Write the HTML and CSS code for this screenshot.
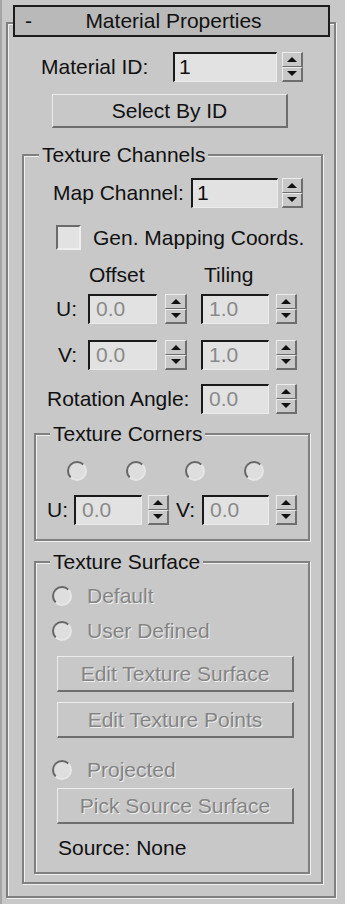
FILE: index.html
```html
<!DOCTYPE html>
<html lang="en">
<head>
    <meta charset="UTF-8">
    <title>Material Properties</title>
    <link rel="stylesheet" href="styles.css">
</head>
<body>
    <div class="page">
        <div class="rollout">
            <div class="rollout-head">
                <span class="toggle">-</span>
                <span class="rollout-title">Material Properties</span>
                <span></span>
            </div>

            <div class="row row-id">
                <span class="lbl lbl-id">Material ID:</span>
                <div class="field field-id">1</div>
                <div class="arrows arrows-id"><span class="up"></span><span class="down"></span></div>
            </div>

            <button class="btn btn-select">Select By ID</button>

            <fieldset class="group group-channels">
                <legend>Texture Channels</legend>

                <div class="row row-map">
                    <span class="lbl lbl-map">Map Channel:</span>
                    <div class="field field-map">1</div>
                    <div class="arrows arrows-map"><span class="up"></span><span class="down"></span></div>
                </div>

                <div class="row row-check">
                    <span class="checkbox"></span>
                    <span class="check-text">Gen. Mapping Coords.</span>
                </div>

                <div class="row row-head">
                    <span class="col-offset">Offset</span>
                    <span>Tiling</span>
                </div>

                <div class="row row-uv">
                    <span class="lbl lbl-uv">U:</span>
                    <div class="field off field-off">0.0</div>
                    <div class="arrows arrows-off"><span class="up"></span><span class="down"></span></div>
                    <div class="field off field-til">1.0</div>
                    <div class="arrows arrows-til"><span class="up"></span><span class="down"></span></div>
                </div>

                <div class="row row-uv row-v">
                    <span class="lbl lbl-uv">V:</span>
                    <div class="field off field-off">0.0</div>
                    <div class="arrows arrows-off"><span class="up"></span><span class="down"></span></div>
                    <div class="field off field-til">1.0</div>
                    <div class="arrows arrows-til"><span class="up"></span><span class="down"></span></div>
                </div>

                <div class="row row-rot">
                    <span class="lbl lbl-rot">Rotation Angle:</span>
                    <div class="field off field-til">0.0</div>
                    <div class="arrows arrows-til"><span class="up"></span><span class="down"></span></div>
                </div>

                <fieldset class="group group-corners">
                    <legend>Texture Corners</legend>
                    <div class="row row-radios">
                        <span class="radio"></span>
                        <span class="radio"></span>
                        <span class="radio"></span>
                        <span class="radio"></span>
                    </div>
                    <div class="row row-corner">
                        <span class="lbl lbl-cu">U:</span>
                        <div class="field off field-cu">0.0</div>
                        <div class="arrows arrows-cu"><span class="up"></span><span class="down"></span></div>
                        <span class="lbl lbl-cv">V:</span>
                        <div class="field off field-cv">0.0</div>
                        <div class="arrows arrows-til"><span class="up"></span><span class="down"></span></div>
                    </div>
                </fieldset>

                <fieldset class="group group-surface">
                    <legend>Texture Surface</legend>
                    <div class="row row-option">
                        <span class="radio"></span>
                        <span class="dim">Default</span>
                    </div>
                    <div class="row row-option row-user">
                        <span class="radio"></span>
                        <span class="dim">User Defined</span>
                    </div>
                    <button class="btn btn-wide btn-surface dim" disabled>Edit Texture Surface</button>
                    <button class="btn btn-wide btn-points dim" disabled>Edit Texture Points</button>
                    <div class="row row-option row-projected">
                        <span class="radio"></span>
                        <span class="dim">Projected</span>
                    </div>
                    <button class="btn btn-wide btn-pick dim" disabled>Pick Source Surface</button>
                    <div class="source">Source: None</div>
                </fieldset>
            </fieldset>
        </div>
    </div>
</body>
</html>
```

FILE: styles.css
```css
* {
    margin: 0;
    padding: 0;
    box-sizing: border-box;
}
body {
    background: #c8c8c8;
    font-family: "Liberation Sans", Arial, sans-serif;
    font-size: 21px;
    line-height: 24px;
    color: #111;
}
.page {
    width: 345px;
    height: 904px;
    border-left: 2px solid #a6a6a6;
    padding: 22px 0 0 4px;
}

/* rollout frame + title bar */
.rollout {
    width: 330px;
    border: 2px solid #808080;
    box-shadow: inset 1px 1px 0 #f0f0f0, 1px 1px 0 #f0f0f0;
    padding-bottom: 12px;
}
.rollout-head {
    margin: -19px 0 0 5px;
    width: 317px;
    height: 32px;
    border: 2px solid #1c1c1c;
    background: #b9b9b9;
    display: grid;
    grid-template-columns: 30px 1fr 30px;
    align-items: center;
}
.toggle {
    padding-left: 10px;
}
.rollout-title {
    text-align: center;
    padding-left: 4px;
}

/* generic rows */
.row {
    display: flex;
    align-items: center;
}
.lbl {
    flex-shrink: 0;
}
.field {
    height: 30px;
    flex-shrink: 0;
    background: #e2e2e2;
    border-top: 2px solid #1a1a1a;
    border-left: 2px solid #1a1a1a;
    border-right: 1px solid #ececec;
    border-bottom: 1px solid #ececec;
    padding-left: 4px;
    line-height: 26px;
}
.field.off {
    color: #8a8a8a;
    padding-left: 6px;
}
.arrows {
    width: 21px;
    height: 30px;
    flex-shrink: 0;
    display: flex;
    flex-direction: column;
}
.arrows span {
    flex: 1;
    display: flex;
    align-items: center;
    justify-content: center;
    border-top: 1px solid #ececec;
    border-left: 1px solid #ececec;
    border-right: 2px solid #6e6e6e;
    border-bottom: 1px solid #6e6e6e;
}
.arrows .down {
    border-bottom-width: 2px;
}
.arrows .up::after {
    content: "";
    border-left: 5px solid transparent;
    border-right: 5px solid transparent;
    border-bottom: 5px solid #111;
}
.arrows .down::after {
    content: "";
    border-left: 5px solid transparent;
    border-right: 5px solid transparent;
    border-top: 5px solid #111;
}

.btn {
    display: block;
    font: inherit;
    color: #111;
    background: #c8c8c8;
    border-top: 1px solid #ececec;
    border-left: 1px solid #ececec;
    border-right: 2px solid #6e6e6e;
    border-bottom: 2px solid #6e6e6e;
    text-align: center;
}
.dim {
    color: #848484;
    text-shadow: 1px 1px 0 #f0f0f0;
}

.radio {
    width: 20px;
    height: 20px;
    flex-shrink: 0;
    border-radius: 50%;
    border: 2px solid;
    border-color: #666 #e6e6e6 #e6e6e6 #666;
    background: #dedede;
}
.checkbox {
    width: 25px;
    height: 25px;
    flex-shrink: 0;
    background: #e2e2e2;
    border: 2px solid;
    border-color: #6a6a6a #eeeeee #eeeeee #6a6a6a;
}

/* group boxes */
.group {
    border: 2px solid #808080;
    box-shadow: inset 1px 1px 0 #f0f0f0, 1px 1px 0 #f0f0f0;
    min-width: 0;
}
.group legend {
    padding: 0 3px;
    background: #c8c8c8;
}

/* Material ID */
.row-id {
    margin: 15px 0 0 33px;
}
.lbl-id {
    width: 132px;
}
.field-id {
    width: 104px;
    margin-right: 5px;
}
.btn-select {
    margin: 12px 0 0 44px;
    width: 236px;
    height: 34px;
}

/* Texture Channels */
.group-channels {
    margin: 15px 11px 0 14px;
    padding-bottom: 8px;
}
.group-channels > legend {
    margin-left: 15px;
}
.row-map {
    margin: 11px 0 0 29px;
}
.lbl-map {
    width: 138px;
}
.field-map {
    width: 87px;
    margin-right: 4px;
}
.row-check {
    margin: 17px 0 0 32px;
}
.check-text {
    margin-left: 12px;
}
.row-head {
    margin: 13px 0 0 65px;
}
.col-offset {
    width: 115px;
}
.row-uv {
    margin-top: 7px;
}
.row-v {
    margin-top: 16px;
}
.lbl-uv {
    width: 64px;
    text-align: right;
    padding-right: 11px;
}
.field-off {
    width: 69px;
    margin-right: 8px;
}
.arrows-off {
    width: 22px;
    margin-right: 14px;
}
.field-til {
    width: 68px;
    margin-right: 7px;
}
.row-rot {
    margin-top: 14px;
}
.lbl-rot {
    width: 177px;
    padding-left: 23px;
}

/* Texture Corners */
.group-corners {
    margin: 8px 11px 0 10px;
    padding-bottom: 14px;
}
.group-corners > legend,
.group-surface > legend {
    margin-left: 14px;
}
.row-radios {
    margin: 15px 0 0 31px;
    gap: 39px;
}
.row-corner {
    margin-top: 14px;
}
.lbl-cu {
    width: 38px;
    padding-left: 11px;
}
.field-cu {
    width: 68px;
    margin-right: 6px;
}
.lbl-cv {
    width: 33px;
    padding-left: 7px;
}
.field-cv {
    width: 67px;
    margin-right: 7px;
}

/* Texture Surface */
.group-surface {
    margin: 9px 11px 0 10px;
    padding-bottom: 12px;
}
.row-option {
    margin: 10px 0 0 16px;
    height: 24px;
    gap: 15px;
}
.row-user {
    margin-top: 11px;
}
.row-projected {
    margin-top: 20px;
}
.btn-wide {
    margin-left: 21px;
    width: 237px;
    height: 36px;
}
.btn-surface {
    margin-top: 13px;
}
.btn-points {
    margin-top: 10px;
}
.btn-pick {
    margin-top: 6px;
}
.source {
    margin: 12px 0 0 22px;
}
```
